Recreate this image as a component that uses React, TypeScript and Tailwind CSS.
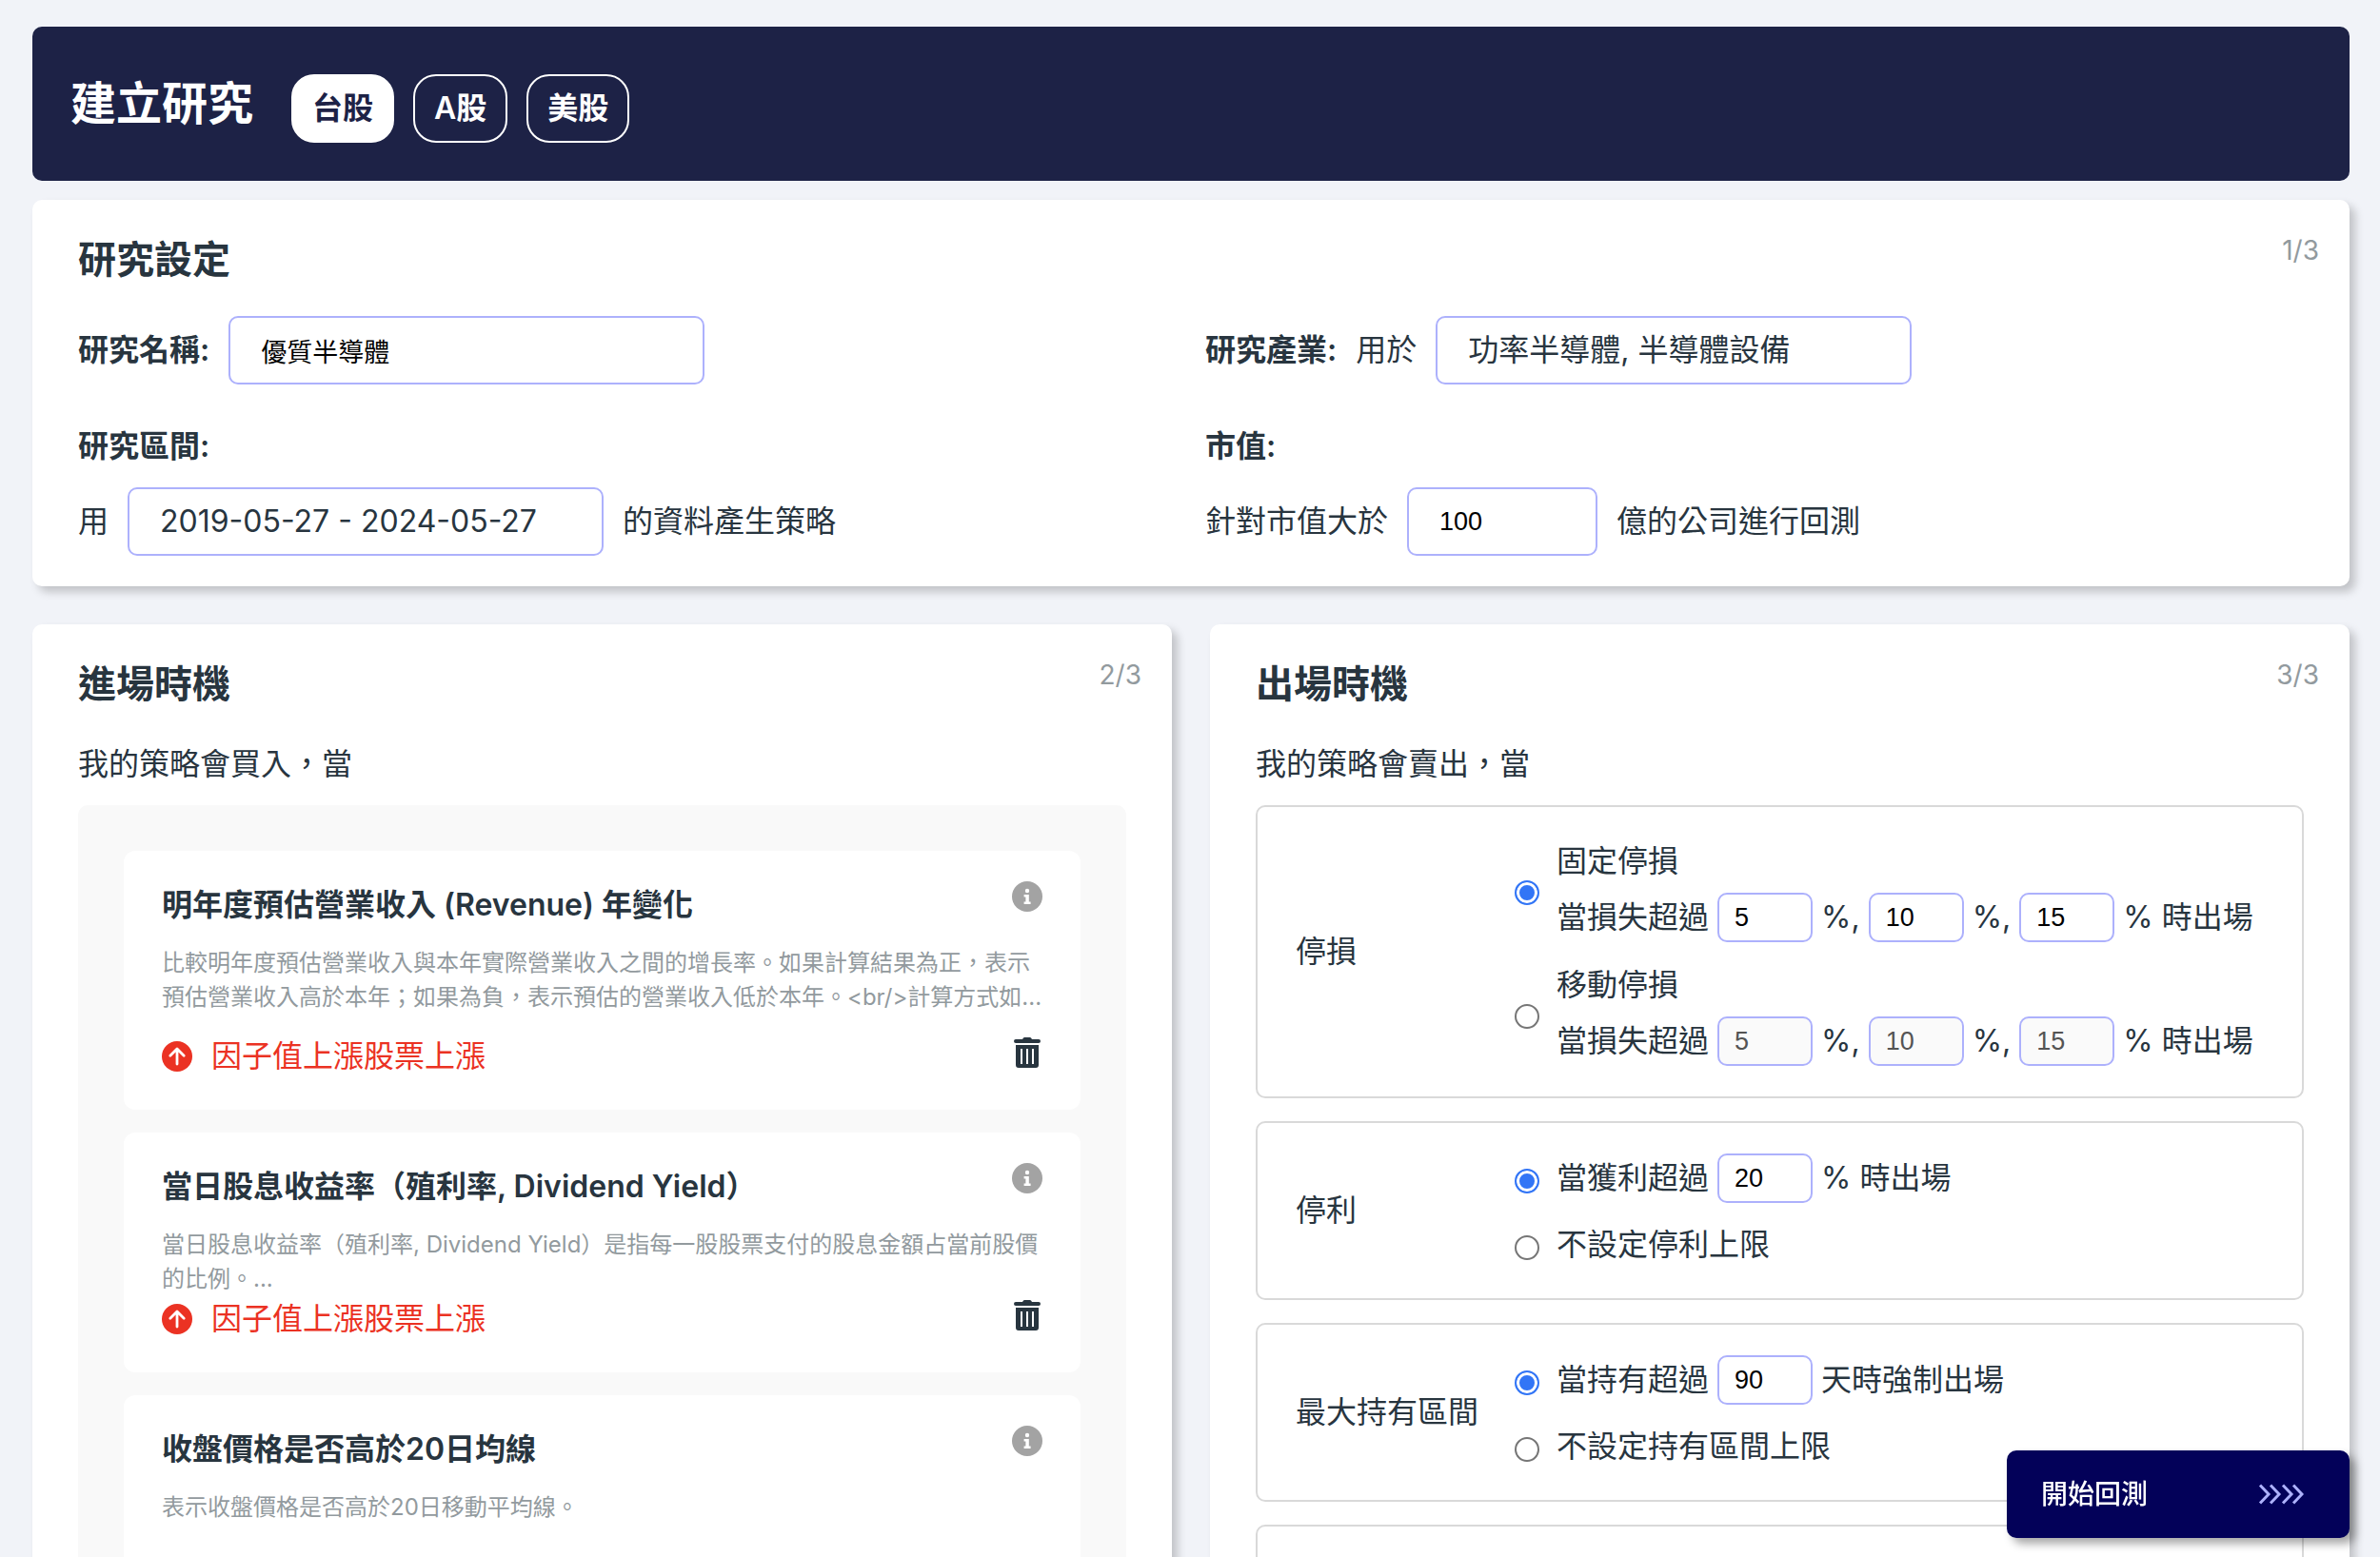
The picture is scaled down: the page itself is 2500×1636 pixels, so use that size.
import { useState, type ReactNode } from 'react'

const markets = ['台股', 'A股', '美股']

const entryFactors = [
  {
    title: '明年度預估營業收入 (Revenue) 年變化',
    description:
      '比較明年度預估營業收入與本年實際營業收入之間的增長率。如果計算結果為正，表示預估營業收入高於本年；如果為負，表示預估的營業收入低於本年。<br/>計算方式如...',
    spaced: true
  },
  {
    title: '當日股息收益率（殖利率, Dividend Yield）',
    description:
      '當日股息收益率（殖利率, Dividend Yield）是指每一股股票支付的股息金額占當前股價的比例。...',
    spaced: false
  },
  {
    title: '收盤價格是否高於20日均線',
    description: '表示收盤價格是否高於20日移動平均線。',
    spaced: true
  }
]

function InfoIcon() {
  return (
    <svg viewBox="0 0 32 32" className="size-8" aria-hidden="true">
      <circle cx="16" cy="16" r="16" fill="#a3a3a3" />
      <circle cx="16" cy="10" r="2.2" fill="#fff" />
      <path d="M12.6 14h5.2v7.6h1.8V24h-7v-2.4h1.8v-5.2h-1.8z" fill="#fff" />
    </svg>
  )
}

function ArrowUpIcon() {
  return (
    <svg viewBox="0 0 32 32" className="size-8" aria-hidden="true">
      <circle cx="16" cy="16" r="16" fill="#eb3223" />
      <path
        d="M16 24V8.5M8.8 15.2L16 8l7.2 7.2"
        fill="none"
        stroke="#fff"
        strokeWidth="2.8"
        strokeLinecap="round"
        strokeLinejoin="round"
      />
    </svg>
  )
}

function TrashIcon() {
  return (
    <svg viewBox="0 0 28 32" className="h-8 w-7" aria-hidden="true">
      <path
        d="M2 2h7l1-1.4Q10.4 0 11.2 0h5.6q.8 0 1.2.6L19 2h7a2 2 0 0 1 0 4H2a2 2 0 0 1 0-4z"
        fill="#28353f"
      />
      <path
        fillRule="evenodd"
        d="M2 8h24v21a3 3 0 0 1-3 3H5a3 3 0 0 1-3-3zM7 12v16h2V12zM13 12v16h2V12zM19 12v16h2V12z"
        fill="#28353f"
      />
    </svg>
  )
}

function ChevronsIcon() {
  return (
    <svg viewBox="0 0 48 22" className="h-[22px] w-12" aria-hidden="true">
      <path
        d="M2 1.5l9 9.5l-9 9.5M13 1.5l9 9.5l-9 9.5M26 1.5l9 9.5l-9 9.5M37 1.5l9 9.5l-9 9.5"
        fill="none"
        stroke="#adb1fb"
        strokeWidth="3"
      />
    </svg>
  )
}

function Card({ title, step, children }: { title: string; step: string; children: ReactNode }) {
  return (
    <section className="rounded-[10px] bg-white px-12 py-8 shadow-[6px_6px_10px_rgba(0,0,0,0.2)]">
      <div className="mb-7 flex items-start justify-between">
        <h2 className="text-[40px] leading-[62px] font-semibold">{title}</h2>
        <span className="-mr-4 text-[28px] leading-[42px] text-[#929a9e]">{step}</span>
      </div>
      {children}
    </section>
  )
}

const fieldClass =
  'h-[72px] rounded-[10px] border-2 border-[#adb1fc] bg-white px-8 outline-none'
const nativeText = "font-['Liberation_Sans','Noto_Sans_CJK_TC',sans-serif] text-[27px] text-black"

function NumberBox({ value, label, disabled }: { value: string; label: string; disabled?: boolean }) {
  return (
    <input
      type="text"
      defaultValue={value}
      aria-label={label}
      disabled={disabled}
      className="h-[52px] w-[100px] rounded-[10px] border-2 border-[#adb1fc] bg-white px-4 font-['Liberation_Sans',sans-serif] text-[27px] text-black outline-none disabled:bg-[#fafafa] disabled:text-[#545454]"
    />
  )
}

function RuleBox({ label, children }: { label: string; children: ReactNode }) {
  return (
    <fieldset
      aria-label={label}
      className="flex items-center rounded-[10px] border-2 border-[#d9d9d9] px-10 py-8"
    >
      <span className="w-[230px] shrink-0">{label}</span>
      <div className="flex flex-col gap-5">{children}</div>
    </fieldset>
  )
}

function Option({
  name,
  label,
  checked,
  children
}: {
  name: string
  label: string
  checked?: boolean
  children: ReactNode
}) {
  return (
    <div className="flex items-center gap-[18px]">
      <input
        type="radio"
        name={name}
        aria-label={label}
        defaultChecked={checked}
        className="mt-1.5 size-[26px] shrink-0 appearance-none rounded-full border-2 border-[#767676] bg-white checked:border-[#3275f6] checked:bg-[#3275f6] checked:shadow-[inset_0_0_0_3px_#fff]"
      />
      {children}
    </div>
  )
}

function LossLine({ disabled }: { disabled?: boolean }) {
  return (
    <div className="flex items-center gap-[9px]">
      <span>當損失超過</span>
      <NumberBox value="5" label="停損一" disabled={disabled} />
      <span>%,</span>
      <NumberBox value="10" label="停損二" disabled={disabled} />
      <span>%,</span>
      <NumberBox value="15" label="停損三" disabled={disabled} />
      <span>% 時出場</span>
    </div>
  )
}

export default function App() {
  const [market, setMarket] = useState('台股')

  return (
    <div className="h-screen overflow-y-auto bg-[#f1f3f8] pt-7 pr-8 pb-5 pl-[34px] font-['Inter','Noto_Sans_CJK_TC',sans-serif] text-[32px] leading-[48px] text-[#28353f] [scrollbar-width:none]">
      <header className="mb-5 flex h-[162px] items-center rounded-[10px] bg-[#1d2246] px-10 text-white">
        <h1 className="mr-10 text-5xl font-bold">建立研究</h1>
        <div className="mt-2.5 flex gap-5">
          {markets.map(m => (
            <button
              key={m}
              type="button"
              onClick={() => setMarket(m)}
              className={
                m === market
                  ? 'h-[72px] rounded-3xl border-2 border-white bg-white px-5 font-semibold text-[#1d2246]'
                  : 'h-[72px] rounded-3xl border-2 border-white px-5 font-semibold text-white'
              }
            >
              {m}
            </button>
          ))}
        </div>
      </header>

      {/* Research settings */}
      <Card title="研究設定" step="1/3">
        <div className="grid grid-cols-2 gap-x-[30px] gap-y-10">
          <div className="flex items-center gap-5">
            <label htmlFor="name" className="font-semibold">研究名稱:</label>
            <input id="name" type="text" defaultValue="優質半導體" className={`${fieldClass} ${nativeText} w-[500px]`} />
          </div>
          <div className="flex items-center gap-5">
            <span className="font-semibold">研究產業:</span>
            <span>用於</span>
            <button type="button" className={`${fieldClass} w-[500px] text-left`}>
              功率半導體, 半導體設備
            </button>
          </div>
          <div>
            <p className="mb-[18px] leading-[50px] font-semibold">研究區間:</p>
            <div className="flex items-center gap-5">
              <span>用</span>
              <button type="button" className={`${fieldClass} w-[500px] text-left`}>
                2019-05-27 - 2024-05-27
              </button>
              <span>的資料產生策略</span>
            </div>
          </div>
          <div>
            <p className="mb-[18px] leading-[50px] font-semibold">市值:</p>
            <div className="flex items-center gap-5">
              <label htmlFor="cap">針對市值大於</label>
              <input id="cap" type="text" defaultValue="100" className={`${fieldClass} ${nativeText} w-[200px]`} />
              <span>億的公司進行回測</span>
            </div>
          </div>
        </div>
      </Card>

      <div className="mt-10 grid grid-cols-2 gap-10">
        {/* Entry rules */}
        <Card title="進場時機" step="2/3">
          <p className="mb-[18px] leading-[50px]">我的策略會買入，當</p>
          <div className="flex flex-col gap-6 rounded-[10px] bg-[#f9f9f9] p-12">
            {entryFactors.map(factor => (
              <article key={factor.title} className="rounded-xl bg-white px-10 py-8">
                <div className="mb-[18px] flex items-start justify-between">
                  <h3 className="leading-[50px] font-semibold">{factor.title}</h3>
                  <button type="button" aria-label="說明">
                    <InfoIcon />
                  </button>
                </div>
                <p className={`min-h-[72px] text-2xl leading-9 text-[#929a9e] ${factor.spaced ? 'mb-5' : ''}`}>
                  {factor.description}
                </p>
                <div className="flex items-center justify-between">
                  <span className="flex items-center gap-5 text-[#eb3223]">
                    <ArrowUpIcon />
                    因子值上漲股票上漲
                  </span>
                  <button type="button" aria-label="刪除" className="mr-0.5 mb-2">
                    <TrashIcon />
                  </button>
                </div>
              </article>
            ))}
          </div>
        </Card>

        {/* Exit rules */}
        <Card title="出場時機" step="3/3">
          <p className="mb-[18px] leading-[50px]">我的策略會賣出，當</p>
          <div className="flex flex-col gap-6">
            <RuleBox label="停損">
              <Option name="loss" label="固定停損" checked>
                <div className="flex flex-col gap-2">
                  <span className="leading-[50px]">固定停損</span>
                  <LossLine />
                </div>
              </Option>
              <Option name="loss" label="移動停損">
                <div className="flex flex-col gap-2">
                  <span className="leading-[50px]">移動停損</span>
                  <LossLine disabled />
                </div>
              </Option>
            </RuleBox>
            <RuleBox label="停利">
              <Option name="profit" label="設定停利" checked>
                <div className="flex items-center gap-[9px]">
                  <span>當獲利超過</span>
                  <NumberBox value="20" label="停利百分比" />
                  <span>% 時出場</span>
                </div>
              </Option>
              <Option name="profit" label="不設定停利上限">
                <span>不設定停利上限</span>
              </Option>
            </RuleBox>
            <RuleBox label="最大持有區間">
              <Option name="holding" label="設定持有區間" checked>
                <div className="flex items-center gap-[9px]">
                  <span>當持有超過</span>
                  <NumberBox value="90" label="持有天數" />
                  <span>天時強制出場</span>
                </div>
              </Option>
              <Option name="holding" label="不設定持有區間上限">
                <span>不設定持有區間上限</span>
              </Option>
            </RuleBox>
            <div className="h-[188px] rounded-[10px] border-2 border-[#d9d9d9]" />
          </div>
        </Card>
      </div>

      <button
        type="button"
        className="fixed right-8 bottom-5 flex h-[92px] w-[360px] items-center justify-between rounded-[10px] bg-[#030159] pr-12 pl-9 text-[28px] font-medium text-white shadow-[6px_6px_10px_rgba(0,0,0,0.35)]"
      >
        開始回測
        <ChevronsIcon />
      </button>
    </div>
  )
}
